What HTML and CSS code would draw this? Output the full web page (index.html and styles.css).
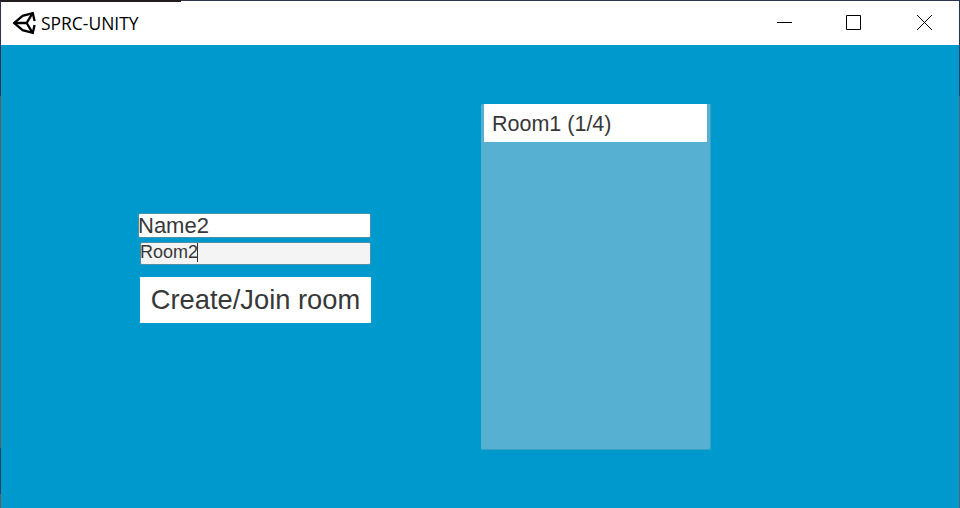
FILE: index.html
```html
<!DOCTYPE html>
<html lang="en">
<head>
<meta charset="utf-8">
<title>SPRC-UNITY</title>
<link rel="stylesheet" href="styles.css">
</head>
<body>
<div class="desktop">
  <div class="edge-top"></div>
  <div class="edge-left"></div>
  <main class="window">
    <header class="titlebar">
      <svg class="logo" width="24" height="24" viewBox="0 0 24 24" fill="none" stroke="#000" stroke-width="2.3">
        <path d="M22.6 10 20.8 2.2 10.6 4.8 2.2 12 10.6 19.2 20.8 21.8 22.6 14"/>
        <path d="M2 12H14.6L20.3 2.6M14.6 12 20.3 21.4"/>
      </svg>
      <h1 class="title">SPRC-UNITY</h1>
      <div class="controls">
        <svg width="15" height="15" viewBox="0 0 15 15"><path d="M0 7.5H15"/></svg>
        <svg width="15" height="15" viewBox="0 0 15 15"><path d="M.5 .5H14.5V14.5H.5Z"/></svg>
        <svg width="15" height="15" viewBox="0 0 15 15"><path d="M0 0 15 15M15 0 0 15"/></svg>
      </div>
    </header>
    <section class="lobby">
      <form class="join">
        <div class="field name">Name2</div>
        <div class="field room">Room2<span class="caret"></span></div>
        <button class="submit" type="button">Create/Join room</button>
      </form>
      <div class="rooms">
        <div class="room-item">Room1 (1/4)</div>
      </div>
    </section>
  </main>
  <div class="edge-right"></div>
</div>
</body>
</html>
```
FILE: styles.css
```css
* { box-sizing: border-box; }

body {
  margin: 0;
  overflow: hidden;
  font-family: "Liberation Sans", Arial, sans-serif;
  color: #383838;
}

.desktop {
  width: 960px;
  height: 508px;
  display: grid;
  grid-template-columns: 1px 958px 1px;
  grid-template-rows: 1px 507px;
}

.edge-top {
  grid-column: 1 / -1;
  background: linear-gradient(90deg, #211d20 181px, #2b3550 181px);
}

.edge-left {
  background: linear-gradient(#2b3550 95px, #626057 95px 447px, #20455c 447px 493px, #626057 493px);
}

.edge-right {
  background: linear-gradient(#253452 44px, #15426a 44px 95px, #4b6a76 95px);
}

.window {
  display: flex;
  flex-direction: column;
  background: #0099cd;
}

.titlebar {
  height: 44px;
  flex: none;
  display: flex;
  align-items: center;
  background: linear-gradient(90deg, #211d20 180px, transparent 180px) top / 100% 1px no-repeat #fff;
  padding: 0 27px 1px 11px;
}

.logo { flex: none; margin-right: 5px; }

.title {
  margin: 0;
  font: 400 18px/24px "Open Sans", "Noto Sans", sans-serif;
  color: #000;
  transform: scaleX(.97);
  transform-origin: left;
}

.controls {
  margin-left: auto;
  display: flex;
  gap: 54px;
}

.controls svg {
  display: block;
  fill: none;
  stroke: #000;
  stroke-width: 1;
}

.controls svg:last-child { margin-left: 2px; }

.lobby {
  flex: 1;
  display: flex;
  align-items: flex-start;
  padding: 59px 0 0 137px;
}

.join {
  width: 233px;
  margin: 109px 110px 0 0;
  display: flex;
  flex-direction: column;
  align-items: flex-end;
}

.field {
  border: 1px solid #4b91aa;
  border-radius: 2px;
  white-space: nowrap;
  display: flex;
}

.name {
  width: 233px;
  height: 25px;
  background: #fff;
  font-size: 22px;
  line-height: 24px;
  text-indent: -1px;
}

.room {
  width: 231px;
  height: 23px;
  margin-top: 4px;
  background: #f4f4f4;
  font-size: 18px;
  line-height: 18px;
  text-indent: -1px;
}

.caret {
  width: 1px;
  height: 19px;
  margin-left: -1px;
  background: #323232;
}

.submit {
  width: 231px;
  height: 46px;
  margin-top: 12px;
  padding: 0;
  border: 0;
  background: #fff;
  color: #383838;
  font: 27.3px/46px "Liberation Sans", Arial, sans-serif;
}

.rooms {
  width: 230px;
  height: 346px;
  padding: 0 4px 0 3px;
  background: #55b0d2;
  border-radius: 2px;
  box-shadow: inset -1px -1px #36a1c5;
}

.room-item {
  height: 38px;
  padding-left: 8px;
  background: #fff;
  font-size: 21.5px;
  line-height: 40px;
}
```
